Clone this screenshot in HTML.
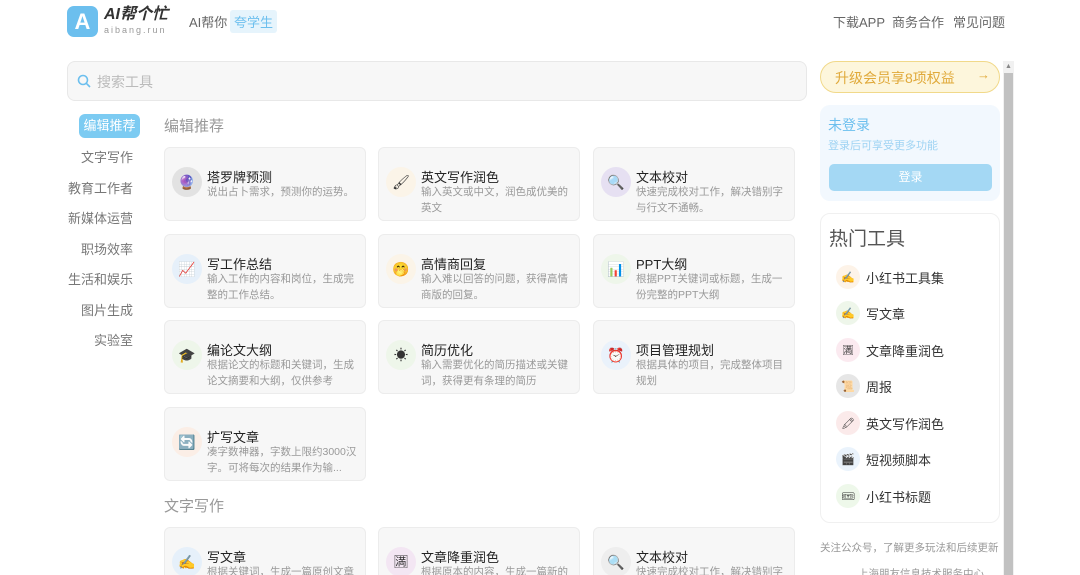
<!DOCTYPE html>
<html><head><meta charset="utf-8"><style>
*{margin:0;padding:0;box-sizing:border-box}
html,body{width:1080px;height:575px;overflow:hidden}
body{background:#fff;font-family:"Liberation Sans","Noto Sans CJK SC",sans-serif;position:relative;color:#333}
.a{position:absolute}
.card{position:absolute;width:202px;height:74px;background:#f7f7f7;border:1px solid #ececec;border-radius:6px}
.card .ic{position:absolute;left:7px;top:19px;width:30px;height:30px;border-radius:50%;display:flex;align-items:center;justify-content:center;font-size:14px}
.card .t{position:absolute;left:42px;top:19px;font-size:13px;color:#222}
.card .d{position:absolute;left:42px;top:36px;width:152px;font-size:10.5px;line-height:16px;color:#999}
.nav{position:absolute;right:947px;font-size:13px;color:#777;white-space:nowrap}
.hot{position:absolute;left:836px;width:156px;height:30px}
.hot .ic{position:absolute;left:0;top:1px;width:24px;height:24px;border-radius:50%;display:flex;align-items:center;justify-content:center;font-size:11px}
.hot .t{position:absolute;left:30px;top:4px;font-size:13px;color:#333}
</style></head><body>
<div class="a" style="left:67px;top:6px;width:31px;height:31px;border-radius:7px;background:#6cbfee;color:#fff;font-weight:bold;font-size:22px;text-align:center;line-height:31px">A</div>
<div class="a" style="left:104px;top:6px;font-size:16px;line-height:18px;font-weight:bold;font-style:italic;color:#333">AI帮个忙</div>
<div class="a" style="left:104px;top:25px;font-size:9px;line-height:10px;letter-spacing:2px;color:#999">aibang.run</div>
<div class="a" style="left:189px;top:12px;font-size:13px;color:#666">AI帮你</div>
<div class="a" style="left:230px;top:10px;padding:2px 4px;background:#e6f4fc;color:#6cbfee;font-size:13px;border-radius:3px">夸学生</div>
<div class="a" style="left:833px;top:12px;font-size:13px;color:#666">下载APP</div>
<div class="a" style="left:892px;top:12px;font-size:13px;color:#666">商务合作</div>
<div class="a" style="left:953px;top:12px;font-size:13px;color:#666">常见问题</div>

<div class="a" style="left:67px;top:61px;width:740px;height:40px;background:#f7f7f7;border:1px solid #e8e8e8;border-radius:8px"></div>
<svg class="a" style="left:77px;top:74px" width="14" height="14" viewBox="0 0 14 14"><circle cx="6" cy="6" r="4.5" fill="none" stroke="#6cbfee" stroke-width="1.6"/><line x1="9.3" y1="9.3" x2="13" y2="13" stroke="#6cbfee" stroke-width="1.6"/></svg>
<div class="a" style="left:97px;top:72px;font-size:14px;color:#bbb">搜索工具</div>

<div class="a" style="left:79px;top:114px;width:61px;height:24px;background:#7ccbf2;border-radius:6px;color:#fff;font-size:13px;text-align:center;line-height:24px">编辑推荐</div>
<div class="nav" style="top:147px">文字写作</div>
<div class="nav" style="top:178px">教育工作者</div>
<div class="nav" style="top:208px">新媒体运营</div>
<div class="nav" style="top:239px">职场效率</div>
<div class="nav" style="top:269px">生活和娱乐</div>
<div class="nav" style="top:300px">图片生成</div>
<div class="nav" style="top:330px">实验室</div>

<div class="a" style="left:164px;top:115px;font-size:15px;color:#999">编辑推荐</div>
<div class="a" style="left:164px;top:495px;font-size:15px;color:#999">文字写作</div>

<div class="card" style="left:164px;top:147px"><div class="ic" style="background:#e2e2e2">🔮</div><div class="t">塔罗牌预测</div><div class="d">说出占卜需求，预测你的运势。</div></div>
<div class="card" style="left:378px;top:147px"><div class="ic" style="background:#fbf4e8">🖌</div><div class="t">英文写作润色</div><div class="d">输入英文或中文，润色成优美的英文</div></div>
<div class="card" style="left:593px;top:147px"><div class="ic" style="background:#e6e0f2">🔍</div><div class="t">文本校对</div><div class="d">快速完成校对工作，解决错别字与行文不通畅。</div></div>
<div class="card" style="left:164px;top:234px"><div class="ic" style="background:#e6f0fa">📈</div><div class="t">写工作总结</div><div class="d">输入工作的内容和岗位，生成完整的工作总结。</div></div>
<div class="card" style="left:378px;top:234px"><div class="ic" style="background:#fbf4e8">🤭</div><div class="t">高情商回复</div><div class="d">输入难以回答的问题，获得高情商版的回复。</div></div>
<div class="card" style="left:593px;top:234px"><div class="ic" style="background:#eef6ea">📊</div><div class="t">PPT大纲</div><div class="d">根据PPT关键词或标题，生成一份完整的PPT大纲</div></div>
<div class="card" style="left:164px;top:320px"><div class="ic" style="background:#eef6ea">🎓</div><div class="t">编论文大纲</div><div class="d">根据论文的标题和关键词，生成论文摘要和大纲，仅供参考</div></div>
<div class="card" style="left:378px;top:320px"><div class="ic" style="background:#eef6ea">☀</div><div class="t">简历优化</div><div class="d">输入需要优化的简历描述或关键词，获得更有条理的简历</div></div>
<div class="card" style="left:593px;top:320px"><div class="ic" style="background:#eaf2fb">⏰</div><div class="t">项目管理规划</div><div class="d">根据具体的项目，完成整体项目规划</div></div>
<div class="card" style="left:164px;top:407px"><div class="ic" style="background:#fbeee6">🔄</div><div class="t">扩写文章</div><div class="d">凑字数神器，字数上限约3000汉字。可将每次的结果作为输...</div></div>
<div class="card" style="left:164px;top:527px"><div class="ic" style="background:#e6f0fa">✍</div><div class="t">写文章</div><div class="d">根据关键词，生成一篇原创文章</div></div>
<div class="card" style="left:378px;top:527px"><div class="ic" style="background:#f3e6f3">🈵</div><div class="t">文章降重润色</div><div class="d">根据原本的内容，生成一篇新的</div></div>
<div class="card" style="left:593px;top:527px"><div class="ic" style="background:#eeeeee">🔍</div><div class="t">文本校对</div><div class="d">快速完成校对工作，解决错别字</div></div>

<div class="a" style="left:820px;top:61px;width:180px;height:32px;border:1px solid #f1d98a;background:#fdf6dc;border-radius:16px"></div>
<div class="a" style="left:835px;top:68px;font-size:14px;color:#e0a93a">升级会员享8项权益</div>
<div class="a" style="left:977px;top:67px;font-size:13px;color:#e0a93a">→</div>

<div class="a" style="left:820px;top:105px;width:180px;height:96px;background:#f2f8fe;border-radius:10px"></div>
<div class="a" style="left:828px;top:115px;font-size:14px;color:#6cbfee">未登录</div>
<div class="a" style="left:828px;top:137px;font-size:11px;color:#9fd3f3">登录后可享受更多功能</div>
<div class="a" style="left:829px;top:164px;width:163px;height:27px;background:#a4d8f4;border-radius:5px;color:#fff;font-size:12px;text-align:center;line-height:27px">登录</div>

<div class="a" style="left:820px;top:213px;width:180px;height:310px;border:1px solid #f0f0f0;border-radius:10px;background:#fff"></div>
<div class="a" style="left:829px;top:224px;font-size:19px;color:#555">热门工具</div>
<div class="hot" style="top:264px"><div class="ic" style="background:#fdf3e8">✍</div><div class="t">小红书工具集</div></div>
<div class="hot" style="top:300px"><div class="ic" style="background:#eef6ea">✍</div><div class="t">写文章</div></div>
<div class="hot" style="top:337px"><div class="ic" style="background:#fbeaf0">🈵</div><div class="t">文章降重润色</div></div>
<div class="hot" style="top:373px"><div class="ic" style="background:#e6e6e6">📜</div><div class="t">周报</div></div>
<div class="hot" style="top:410px"><div class="ic" style="background:#fbeaea">🖍</div><div class="t">英文写作润色</div></div>
<div class="hot" style="top:446px"><div class="ic" style="background:#eaf3fc">🎬</div><div class="t">短视频脚本</div></div>
<div class="hot" style="top:483px"><div class="ic" style="background:#eef8ea">🎟</div><div class="t">小红书标题</div></div>
<div class="a" style="left:820px;top:540px;font-size:10.5px;color:#999;white-space:nowrap">关注公众号，了解更多玩法和后续更新</div>
<div class="a" style="left:858px;top:566px;font-size:10.5px;color:#999">上海朋友信息技术服务中心</div>

<div class="a" style="left:1003px;top:61px;width:11px;height:514px;background:#f1f1f1"></div>
<div class="a" style="left:1004px;top:73px;width:9px;height:502px;background:#c1c1c1"></div>
<div class="a" style="left:1005px;top:63px;font-size:7px;color:#888">▲</div>
</body></html>
